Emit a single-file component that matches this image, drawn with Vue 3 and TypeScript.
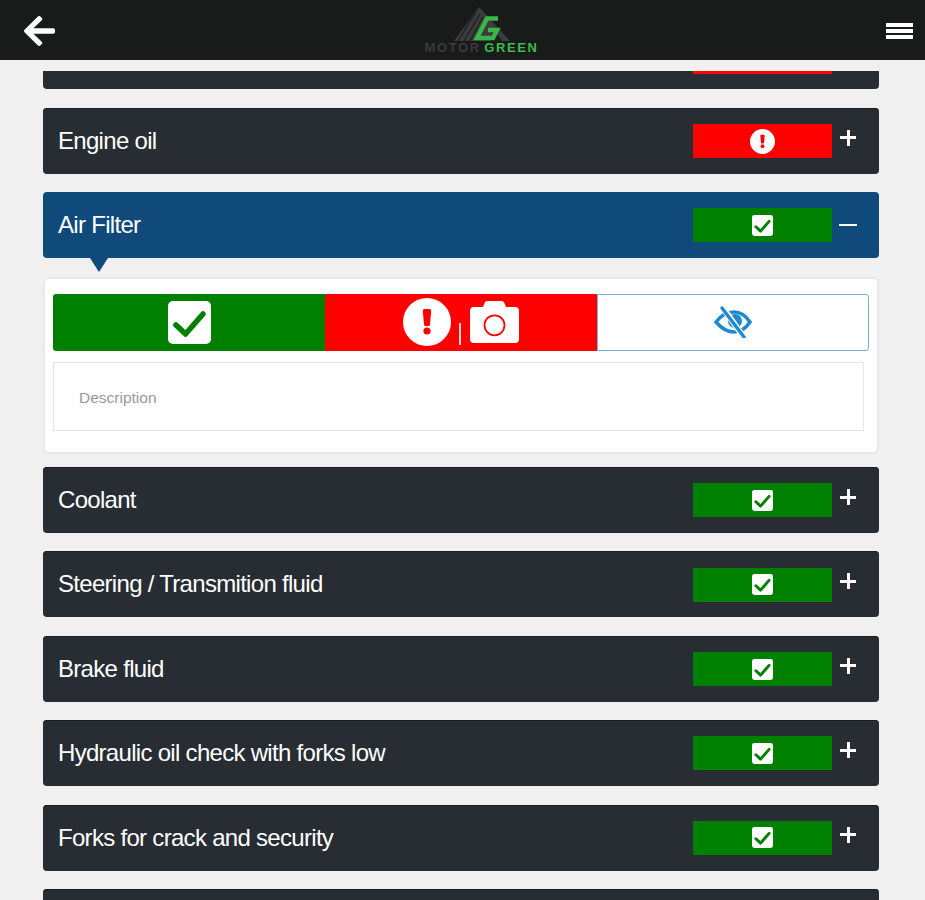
<template>
  <div class="page">
    <header class="topbar">
      <svg class="topbar__back" viewBox="0 0 448 512" aria-hidden="true">
        <path fill="#fff" d="M257.5 445.1l-22.2 22.2c-9.4 9.4-24.6 9.4-33.9 0L7 273c-9.4-9.4-9.4-24.6 0-33.9L201.4 44.7c9.4-9.4 24.6-9.4 33.9 0l22.2 22.2c9.5 9.5 9.3 25-.4 34.3L136.6 216H424c13.3 0 24 10.7 24 24v32c0 13.3-10.7 24-24 24H136.6l120.5 114.8c9.8 9.3 10 24.8.4 34.3z" />
      </svg>
      <div class="logo">
        <svg class="logo__mark" viewBox="0 0 60 34" aria-hidden="true">
          <path fill="#3b3c3d" d="M27 0 L58 34 L2 34 Z" />
          <path stroke="#1d1e1e" stroke-width="1.2" d="M24 5 L6 34 M28 7 L12 34 M31 10 L18 34" />
          <path fill="#1d1e1e" d="M42 22 L50 34 L38 34 Z" />
          <path fill="none" stroke="#39b54a" stroke-width="4.5" d="M46 11.5 H35 L25 31 H41 L45 23 H36" />
        </svg>
        <div class="logo__text"><span class="logo__motor">MOTOR</span><span class="logo__green">GREEN</span></div>
      </div>
      <div class="topbar__menu" aria-hidden="true"><i></i><i></i><i></i></div>
    </header>

    <main class="list">
      <template v-for="item in items" :key="item.id">
        <div class="row" :class="{ 'row--open': item.open }">
          <span class="row__label">{{ item.label }}</span>
          <span class="status" :class="item.ok ? 'status--ok' : 'status--bad'">
            <svg v-if="item.ok" class="status__check" viewBox="0 0 43 43" aria-hidden="true">
              <rect width="43" height="43" rx="5" fill="#fff" />
              <path :d="checkLine" fill="none" stroke="#008000" stroke-width="6" stroke-linecap="round" stroke-linejoin="round" />
            </svg>
            <svg v-else class="status__alert" viewBox="0 0 48 48" aria-hidden="true">
              <circle cx="24" cy="24" r="24" fill="#fff" />
              <path :d="alertBar" fill="#ff0000" />
              <circle cx="24" cy="33" r="3.6" fill="#ff0000" />
            </svg>
          </span>
          <span class="row__toggle" :class="{ 'row__toggle--minus': item.open }"></span>
        </div>

        <section v-if="item.open" class="panel">
          <div class="choices">
            <button class="choice choice--ok">
              <svg class="choice__check" viewBox="0 0 43 43" aria-hidden="true">
                <rect width="43" height="43" rx="5" fill="#fff" />
                <path :d="checkLine" fill="none" stroke="#008000" stroke-width="5.5" stroke-linecap="round" stroke-linejoin="round" />
              </svg>
            </button>
            <button class="choice choice--bad">
              <svg class="choice__alert" viewBox="0 0 48 48" aria-hidden="true">
                <circle cx="24" cy="24" r="24" fill="#fff" />
                <path :d="alertBar" fill="#ff0000" />
                <circle cx="24" cy="33" r="3.6" fill="#ff0000" />
              </svg>
              <span class="choice__sep"></span>
              <svg class="choice__camera" viewBox="0 0 49 42" aria-hidden="true">
                <path fill="#fff" d="M4 6 H13 L14.5 2 Q15.3 0 17.5 0 H31.5 Q33.7 0 34.5 2 L36 6 H45 Q49 6 49 10 V38 Q49 42 45 42 H4 Q0 42 0 38 V10 Q0 6 4 6 Z" />
                <circle cx="24.5" cy="24.3" r="10" fill="none" stroke="#ff0000" stroke-width="1.8" />
              </svg>
            </button>
            <button class="choice choice--skip">
              <svg class="choice__eye" viewBox="0 0 38 32" aria-hidden="true">
                <path fill="none" stroke="#1f8ad0" stroke-width="3.6" d="M2 16 C8 8 14 6 20 6 C27 6 32 10 36 16 C32 22 27 26 20 26 C14 26 8 23 2 16 Z" />
                <circle cx="21" cy="15" r="7" fill="#1f8ad0" />
                <path fill="none" stroke="#fff" stroke-width="6" d="M9 2 L29 30" />
                <path fill="none" stroke="#1f8ad0" stroke-width="3.4" stroke-linecap="round" d="M8 2 L30 31" />
              </svg>
            </button>
          </div>
          <div class="desc">Description</div>
        </section>
      </template>
    </main>
  </div>
</template>

<script setup lang="ts">
type Item = { id: number; label: string; ok: boolean; open?: boolean }

const checkLine = 'M8 24 L17.5 33 L35 13'
const alertBar = 'M19.8 13 Q19.6 11 21.5 11 H26.5 Q28.4 11 28.2 13 L27 26.5 Q26.9 28 25.5 28 H22.5 Q21.1 28 21 26.5 Z'

// first and last rows are cut off by the scroll area
const items: Item[] = [
  { id: 1, label: '', ok: false },
  { id: 2, label: 'Engine oil', ok: false },
  { id: 3, label: 'Air Filter', ok: true, open: true },
  { id: 4, label: 'Coolant', ok: true },
  { id: 5, label: 'Steering / Transmition fluid', ok: true },
  { id: 6, label: 'Brake fluid', ok: true },
  { id: 7, label: 'Hydraulic oil check with forks low', ok: true },
  { id: 8, label: 'Forks for crack and security', ok: true },
  { id: 9, label: '', ok: true },
]
</script>

<style>
html,
body {
  height: 100%;
  overflow: hidden;
  background: #f0f0f0;
}
</style>

<style scoped>
.page {
  height: 900px;
  overflow: hidden;
  background: #f0f0f0;
  font-family: "Liberation Sans", Arial, sans-serif;
}

.topbar {
  display: flex;
  align-items: center;
  justify-content: space-between;
  height: 60px;
  padding: 0 12px 0 24px;
  box-sizing: border-box;
  background: #191a1a;
}

.topbar__back {
  width: 31px;
  height: 36px;
  margin-top: 2px;
}

.topbar__menu {
  display: flex;
  flex-direction: column;
  gap: 2px;
  width: 27px;
  margin-top: 1px;
}

.topbar__menu i {
  height: 4px;
  background: #fff;
}

.logo {
  display: flex;
  flex-direction: column;
  align-items: center;
  width: 114px;
  margin-left: 22px;
}

.logo__mark {
  display: block;
  width: 60px;
  height: 34px;
}

.logo__text {
  display: flex;
  justify-content: space-between;
  width: 114px;
  margin-top: 1px;
  font-size: 13px;
  line-height: 12px;
  font-weight: 700;
  letter-spacing: 1.6px;
}

.logo__motor {
  color: #3a3b3c;
}

.logo__green {
  color: #3dba4e;
}

.list {
  height: 829px;
  margin-top: 11px;
  padding: 0 46px 0 43px;
  overflow: hidden;
}

.row {
  display: flex;
  align-items: center;
  height: 66px;
  margin-bottom: 18.4px;
  padding: 0 15px;
  box-sizing: border-box;
  border-radius: 4px;
  background: #272d33;
  box-shadow: inset 0 1px 0 #1a1d21;
  color: #fff;
}

.row:first-child {
  margin-top: -47.6px;
}

.row--open {
  position: relative;
  background: #0f4a7a;
  box-shadow: none;
}

.row--open::after {
  content: "";
  position: absolute;
  left: 47px;
  top: 100%;
  border-left: 9px solid transparent;
  border-right: 9px solid transparent;
  border-top: 14px solid #0f4a7a;
}

.row__label {
  flex: 1;
  font-size: 24px;
  letter-spacing: -0.7px;
  white-space: nowrap;
}

.status {
  display: flex;
  align-items: center;
  justify-content: center;
  width: 139px;
  height: 34px;
  margin-top: 0.5px;
}

.status--ok {
  background: #008000;
}

.status--bad {
  background: #ff0000;
}

.status__check {
  width: 21px;
  height: 21px;
}

.status__alert {
  width: 25px;
  height: 25px;
}

.row__toggle {
  position: relative;
  width: 16px;
  height: 16px;
  margin: -6px 8px 0 8px;
}

.row__toggle::before,
.row__toggle:not(.row__toggle--minus)::after {
  content: "";
  position: absolute;
  background: #fff;
}

.row__toggle::before {
  left: 0;
  right: 0;
  top: 6.5px;
  height: 3px;
}

.row__toggle:not(.row__toggle--minus)::after {
  top: 0;
  bottom: 0;
  left: 6.5px;
  width: 3px;
}

.row__toggle--minus {
  margin-top: 0;
}

.row__toggle--minus::before {
  left: -1px;
  right: -1px;
  height: 2.5px;
}

.panel {
  height: 177.8px;
  margin-bottom: 12.65px;
  padding: 15px 8px 0;
  box-sizing: border-box;
  border: 2px solid #e8e8e8;
  border-radius: 6px;
  background: #fff;
}

.choices {
  display: grid;
  grid-template-columns: repeat(3, minmax(0, 1fr));
  height: 57px;
}

.choice {
  display: flex;
  align-items: center;
  justify-content: center;
  padding: 0;
  border: 0;
  background: none;
}

.choice--ok {
  border-radius: 3px 0 0 3px;
  background: #008000;
}

.choice--bad {
  background: #ff0000;
  gap: 8px;
}

.choice--skip {
  border: 1.5px solid #7ab0dc;
  border-radius: 0 3px 3px 0;
  background: #fff;
}

.choice__check {
  width: 43px;
  height: 43px;
}

.choice__alert {
  width: 48px;
  height: 48px;
}

.choice__sep {
  align-self: flex-end;
  width: 2px;
  height: 22px;
  margin-bottom: 6px;
  background: rgba(255, 255, 255, 0.85);
}

.choice__camera {
  width: 49px;
  height: 42px;
  margin-left: 1px;
}

.choice__eye {
  width: 38px;
  height: 32px;
}

.desc {
  height: 69px;
  margin: 11px 5px 0 0;
  padding-left: 25px;
  box-sizing: border-box;
  border: 1.5px solid #e6e6e6;
  color: #999;
  font-size: 15.5px;
  line-height: 69px;
}
</style>
